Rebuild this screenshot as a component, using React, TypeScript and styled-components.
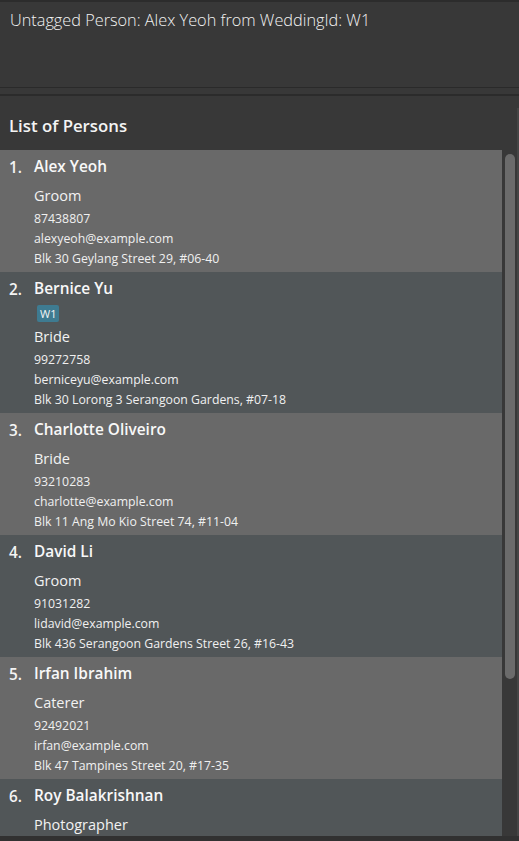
import React from "react";
import styled, { createGlobalStyle } from "styled-components";

const Global = createGlobalStyle`
  html, body { margin: 0; padding: 0; background: #383838; }
  body { font-family: "Open Sans", "Noto Sans", sans-serif; }
  * { box-sizing: border-box; }
`;

const Window = styled.div`
  width: 519px;
  height: 841px;
  display: flex;
  flex-direction: column;
  background: #383838;
  overflow: hidden;
  border-top: 2px solid #2c2c2c;
`;

const ResultBox = styled.div`
  height: 86px;
  background: #383838;
  padding: 7px 10px;
  color: #f2f2f2;
  font-weight: 300;
  font-size: 16.3px;
  line-height: 22px;
  border-bottom: 1px solid #2a2a2a;
`;

const Divider = styled.div`
  height: 8px;
  background: #383838;
  border-bottom: 2px solid #2b2b2b;
`;

const ListPanel = styled.div`
  flex: 1;
  display: flex;
  flex-direction: column;
  min-height: 0;
  border-bottom: 5px solid #313131;
`;

const Header = styled.div`
  height: 54px;
  padding: 20px 9px 0 9px;
  color: #f4f4f4;
  font-weight: 600;
  font-size: 16.8px;
  line-height: 20px;
`;

const ListArea = styled.div`
  flex: 1;
  display: flex;
  min-height: 0;
`;

const Cards = styled.div`
  width: 502px;
  display: flex;
  flex-direction: column;
  overflow: hidden;
`;

const Track = styled.div`
  width: 17px;
  display: flex;
  justify-content: flex-start;
  padding: 46px 0 0 3px;
  border-right: 2px solid #454545;
  margin-top: -42px;
`;

const Thumb = styled.div`
  width: 10px;
  height: 525px;
  border-radius: 5px;
  background: #6b6b6b;
`;

const Card = styled.div<{ $odd: boolean }>`
  flex-shrink: 0;
  display: flex;
  padding: 7px 10px 3px 9px;
  background: ${(p) => (p.$odd ? "#696969" : "#515658")};
`;

const Index = styled.div`
  width: 25px;
  color: #f4f4f4;
  font-weight: 600;
  font-size: 15.3px;
  line-height: 20px;
`;

const Body = styled.div`
  display: flex;
  flex-direction: column;
`;

const Name = styled.div`
  color: #f8f8f8;
  font-weight: 600;
  font-size: 15.4px;
  line-height: 20px;
`;

const Tags = styled.div`
  display: flex;
  gap: 4px;
  margin-top: 6px;
  margin-left: 3px;
`;

const Tag = styled.span`
  height: 17px;
  background: #3e7b91;
  color: #f4f4f4;
  font-size: 11px;
  line-height: 17px;
  padding: 0 3px;
  border-radius: 2px;
`;

const Role = styled.div<{ $afterTags: boolean }>`
  margin-top: ${(p) => (p.$afterTags ? "5px" : "9px")};
  color: #f2f2f2;
  font-size: 14.5px;
  line-height: 20px;
`;

const Details = styled.div`
  margin-top: 3px;
  display: flex;
  flex-direction: column;
`;

const Small = styled.div`
  color: #f0f0f0;
  font-size: 12.3px;
  line-height: 20px;
`;

type Person = {
  name: string;
  tags: string[];
  role: string;
  phone: string;
  email: string;
  address: string;
};

const persons: Person[] = [
  { name: "Alex Yeoh", tags: [], role: "Groom", phone: "87438807", email: "alexyeoh@example.com", address: "Blk 30 Geylang Street 29, #06-40" },
  { name: "Bernice Yu", tags: ["W1"], role: "Bride", phone: "99272758", email: "berniceyu@example.com", address: "Blk 30 Lorong 3 Serangoon Gardens, #07-18" },
  { name: "Charlotte Oliveiro", tags: [], role: "Bride", phone: "93210283", email: "charlotte@example.com", address: "Blk 11 Ang Mo Kio Street 74, #11-04" },
  { name: "David Li", tags: [], role: "Groom", phone: "91031282", email: "lidavid@example.com", address: "Blk 436 Serangoon Gardens Street 26, #16-43" },
  { name: "Irfan Ibrahim", tags: [], role: "Caterer", phone: "92492021", email: "irfan@example.com", address: "Blk 47 Tampines Street 20, #17-35" },
  { name: "Roy Balakrishnan", tags: [], role: "Photographer", phone: "92624417", email: "royb@example.com", address: "Blk 45 Aljunied Street 85, #11-31" },
];

export default function App() {
  return (
    <>
      <Global />
      <Window>
        <ResultBox>Untagged Person: Alex Yeoh from WeddingId: W1</ResultBox>
        <Divider />
        <ListPanel>
          <Header>List of Persons</Header>
          <ListArea>
            <Cards>
              {persons.map((p, i) => (
                <Card key={p.name} $odd={i % 2 === 0}>
                  <Index>{i + 1}.</Index>
                  <Body>
                    <Name>{p.name}</Name>
                    {p.tags.length > 0 && (
                      <Tags>
                        {p.tags.map((t) => (
                          <Tag key={t}>{t}</Tag>
                        ))}
                      </Tags>
                    )}
                    <Role $afterTags={p.tags.length > 0}>{p.role}</Role>
                    <Details>
                      <Small>{p.phone}</Small>
                      <Small>{p.email}</Small>
                      <Small>{p.address}</Small>
                    </Details>
                  </Body>
                </Card>
              ))}
            </Cards>
            <Track>
              <Thumb />
            </Track>
          </ListArea>
        </ListPanel>
      </Window>
    </>
  );
}
